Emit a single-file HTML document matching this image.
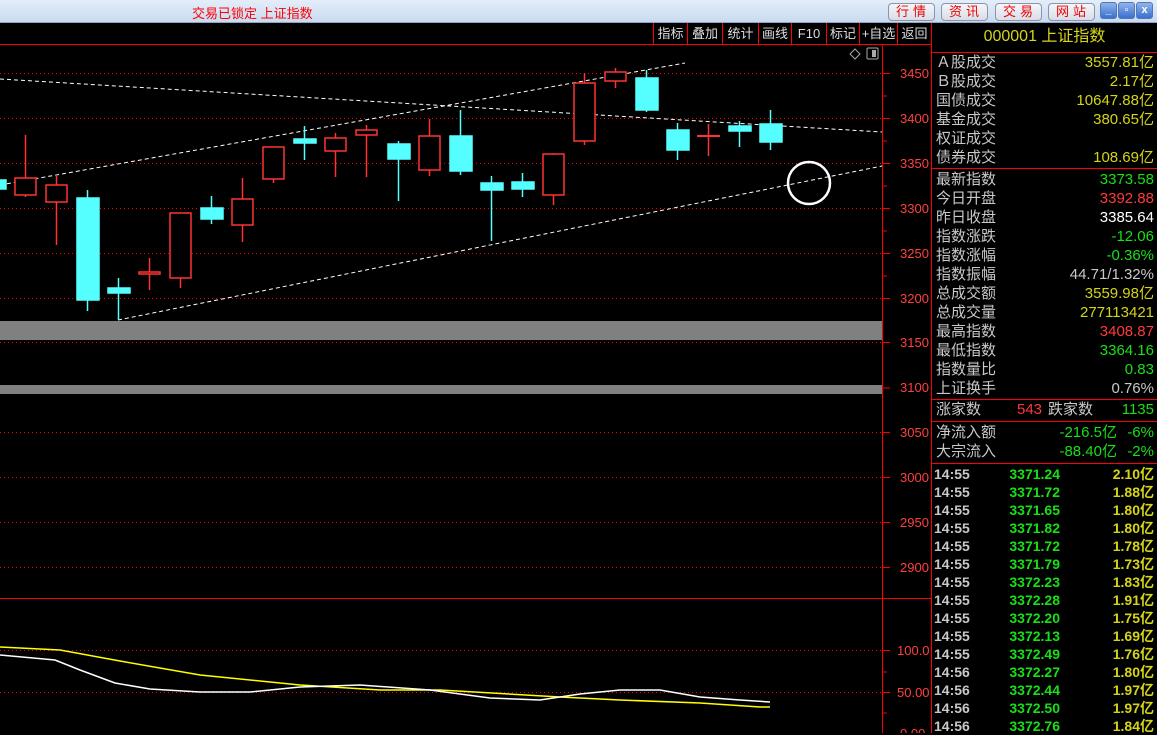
<!DOCTYPE html>
<html><head><meta charset="utf-8">
<style>
*{margin:0;padding:0;box-sizing:border-box}
body{width:1157px;height:733px;overflow:hidden;background:#000;font-family:"Liberation Sans","Noto Sans CJK SC",sans-serif;position:relative}
.title{position:absolute;left:0;top:0;width:1157px;height:23px;background:linear-gradient(#e4eefa,#c9daf0);border-bottom:1px solid #8fa4c0}
.title .t{position:absolute;left:192px;top:3px;color:#f00;font-size:13px}
.btn{position:absolute;top:3px;height:18px;width:47px;border:1px solid #8a96a8;border-radius:4px;background:linear-gradient(#f4f6fa,#d8dee8);color:#e00;font-size:13px;text-align:center;line-height:16px;letter-spacing:4px;padding-left:3px}
.wc{position:absolute;top:2px;width:17px;height:17px;border-radius:3px;background:linear-gradient(#8fb4ec,#3b6fd0);border:1px solid #5578b0;color:#fff;font-size:11px;font-weight:bold;text-align:center;line-height:15px}
.tb{position:absolute;top:23px;height:21px;color:#ddd;font-size:13px;line-height:21px;text-align:center;border-left:1px solid #f00}
.p{position:absolute;font-size:15px;line-height:18px;white-space:nowrap}
.l{color:#c8c8c8;left:936px}
.r{text-align:right;right:3px}
.y{color:#d4d41a}.g{color:#16e016}.rd{color:#ff3a3a}.w{color:#fff}.gr{color:#c8c8c8}
.hl{position:absolute;left:932px;width:225px;height:1px;background:#f00}
.tk{position:absolute;left:934px;width:220px;height:18px;font-size:14px;line-height:18px;font-weight:bold}
.tk span{position:absolute;top:0}
.tk .a{left:0;color:#c8c8c8}.tk .b{right:94px;color:#16e016}.tk .c{right:0;color:#d4d41a}
</style></head><body>
<div class="title"><span class="t">交易已锁定 上证指数</span>
<div class="btn" style="left:888px">行情</div><div class="btn" style="left:941px">资讯</div><div class="btn" style="left:995px">交易</div><div class="btn" style="left:1048px">网站</div>
<div class="wc" style="left:1100px">_</div><div class="wc" style="left:1118px">▫</div><div class="wc" style="left:1136px">x</div>
</div>
<div class="tb" style="left:653px;width:34px">指标</div>
<div class="tb" style="left:687px;width:35px">叠加</div>
<div class="tb" style="left:722px;width:36px">统计</div>
<div class="tb" style="left:758px;width:33px">画线</div>
<div class="tb" style="left:791px;width:35px">F10</div>
<div class="tb" style="left:826px;width:33px">标记</div>
<div class="tb" style="left:859px;width:38px">+自选</div>
<div class="tb" style="left:897px;width:35px;border-right:1px solid #f00">返回</div>

<svg style="position:absolute;left:0;top:0" width="932" height="733">
<line x1="0" y1="44.5" x2="932" y2="44.5" stroke="#f00"/>
<line x1="931.5" y1="23" x2="931.5" y2="733" stroke="#f00"/>
<line x1="882.5" y1="44" x2="882.5" y2="733" stroke="#f00"/>
<line x1="0" y1="598.5" x2="932" y2="598.5" stroke="#f00"/>
<rect x="0" y="321" width="882" height="19" fill="#808080"/>
<rect x="0" y="385" width="882" height="9" fill="#808080"/>
<g stroke="#f00" stroke-dasharray="1,3" stroke-width="1">
<line x1="0" y1="73.5" x2="882" y2="73.5"/><line x1="0" y1="118.5" x2="882" y2="118.5"/><line x1="0" y1="163.5" x2="882" y2="163.5"/><line x1="0" y1="208.5" x2="882" y2="208.5"/><line x1="0" y1="253.5" x2="882" y2="253.5"/><line x1="0" y1="298.5" x2="882" y2="298.5"/><line x1="0" y1="342.5" x2="882" y2="342.5"/><line x1="0" y1="432.5" x2="882" y2="432.5"/><line x1="0" y1="477.5" x2="882" y2="477.5"/><line x1="0" y1="522.5" x2="882" y2="522.5"/><line x1="0" y1="567.5" x2="882" y2="567.5"/><line x1="0" y1="650.5" x2="882" y2="650.5"/><line x1="0" y1="692.5" x2="882" y2="692.5"/>
</g>
<g stroke="#f00"><line x1="883" y1="73.5" x2="890" y2="73.5"/><line x1="883" y1="96" x2="887" y2="96"/><line x1="883" y1="118.5" x2="890" y2="118.5"/><line x1="883" y1="141" x2="887" y2="141"/><line x1="883" y1="163.5" x2="890" y2="163.5"/><line x1="883" y1="186" x2="887" y2="186"/><line x1="883" y1="208.5" x2="890" y2="208.5"/><line x1="883" y1="231" x2="887" y2="231"/><line x1="883" y1="253.5" x2="890" y2="253.5"/><line x1="883" y1="276" x2="887" y2="276"/><line x1="883" y1="298.5" x2="890" y2="298.5"/><line x1="883" y1="342.5" x2="890" y2="342.5"/><line x1="883" y1="388" x2="890" y2="388"/><line x1="883" y1="432.5" x2="890" y2="432.5"/><line x1="883" y1="477.5" x2="890" y2="477.5"/><line x1="883" y1="522.5" x2="890" y2="522.5"/><line x1="883" y1="567.5" x2="890" y2="567.5"/><line x1="883" y1="650.5" x2="890" y2="650.5"/><line x1="883" y1="672" x2="887" y2="672"/><line x1="883" y1="692.5" x2="890" y2="692.5"/><line x1="883" y1="713" x2="887" y2="713"/></g>
<g fill="#ff4040" font-size="13" font-family="Liberation Sans,sans-serif">
<text x="900" y="78">3450</text><text x="900" y="123">3400</text><text x="900" y="168">3350</text><text x="900" y="213">3300</text><text x="900" y="258">3250</text><text x="900" y="303">3200</text><text x="900" y="347">3150</text><text x="900" y="392">3100</text><text x="900" y="437">3050</text><text x="900" y="482">3000</text><text x="900" y="527">2950</text><text x="900" y="572">2900</text><text x="897" y="655">100.0</text><text x="897" y="697">50.00</text><text x="900" y="738">0.00</text>
</g>
<path d="M850 54 l5 -5 l5 5 l-5 5z" fill="none" stroke="#aaa"/>
<rect x="867" y="48" width="11" height="11" fill="none" stroke="#aaa" rx="1"/><rect x="872" y="50" width="4" height="7" fill="#aaa"/>
<g stroke="#fff" stroke-width="1" stroke-dasharray="4,3" fill="none">
<line x1="0" y1="79" x2="882" y2="132"/>
<line x1="0" y1="185" x2="685" y2="63"/>
<line x1="118" y1="320" x2="882" y2="166"/>
</g>
<circle cx="809" cy="183" r="21" fill="none" stroke="#fff" stroke-width="2.5"/>
<g stroke-width="1.5">
<g fill="#55ffff" stroke="#55ffff">
<rect x="0" y="180" width="6" height="9"/>
<line x1="87.5" y1="190" x2="87.5" y2="311"/><rect x="77" y="198" width="22" height="102"/>
<line x1="118.5" y1="278" x2="118.5" y2="320"/><rect x="108" y="288" width="22" height="5"/>
<line x1="211.5" y1="196" x2="211.5" y2="224"/><rect x="201" y="208" width="22" height="11"/>
<line x1="304.5" y1="126" x2="304.5" y2="160"/><rect x="294" y="139" width="22" height="4"/>
<line x1="398.5" y1="141" x2="398.5" y2="201"/><rect x="388" y="144" width="22" height="15"/>
<line x1="460.5" y1="110" x2="460.5" y2="175"/><rect x="450" y="136" width="22" height="35"/>
<line x1="491.5" y1="176" x2="491.5" y2="241"/><rect x="481" y="183" width="22" height="7"/>
<line x1="522.5" y1="173" x2="522.5" y2="197"/><rect x="512" y="182" width="22" height="7"/>
<line x1="646.5" y1="70" x2="646.5" y2="112"/><rect x="636" y="78" width="22" height="32"/>
<line x1="677.5" y1="123" x2="677.5" y2="160"/><rect x="667" y="130" width="22" height="20"/>
<line x1="739.5" y1="121" x2="739.5" y2="147"/><rect x="729" y="126" width="22" height="5"/>
<line x1="770.5" y1="110" x2="770.5" y2="150"/><rect x="760" y="124" width="22" height="18"/>
</g>
<g fill="#000" stroke="#ff3333">
<line x1="25.5" y1="135" x2="25.5" y2="197"/><rect x="15" y="178" width="21" height="17"/>
<line x1="56.5" y1="176" x2="56.5" y2="245"/><rect x="46" y="185" width="21" height="17"/>
<line x1="149.5" y1="258" x2="149.5" y2="290"/><rect x="139" y="272" width="21" height="2"/>
<line x1="180.5" y1="278" x2="180.5" y2="288"/><rect x="170" y="213" width="21" height="65"/>
<line x1="242.5" y1="178" x2="242.5" y2="242"/><rect x="232" y="199" width="21" height="26"/>
<line x1="273.5" y1="179" x2="273.5" y2="183"/><rect x="263" y="147" width="21" height="32"/>
<line x1="335.5" y1="133" x2="335.5" y2="177"/><rect x="325" y="138" width="21" height="13"/>
<line x1="366.5" y1="125" x2="366.5" y2="177"/><rect x="356" y="130" width="21" height="5"/>
<line x1="429.5" y1="119" x2="429.5" y2="176"/><rect x="419" y="136" width="21" height="34"/>
<line x1="553.5" y1="153" x2="553.5" y2="205"/><rect x="543" y="154" width="21" height="41"/>
<line x1="584.5" y1="73" x2="584.5" y2="145"/><rect x="574" y="83" width="21" height="58"/>
<line x1="615.5" y1="68" x2="615.5" y2="88"/><rect x="605" y="72" width="21" height="9"/>
<line x1="708.5" y1="124" x2="708.5" y2="156"/><line x1="697" y1="136" x2="720" y2="136" stroke-width="2"/>
</g>
</g>
<polyline fill="none" stroke="#ffff00" stroke-width="1.5" points="0,647 60,650 120,661 200,675 300,685 380,690 440,690 560,697 620,700 700,703 760,707 770,707"/>
<polyline fill="none" stroke="#fff" stroke-width="1.5" points="0,655 55,660 80,670 115,683 150,689 200,692 250,692 300,687 360,685 430,690 490,698 540,700 580,694 620,690 660,690 700,697 740,700 770,702"/>
</svg>

<div class="p y" style="left:932px;width:225px;top:28px;text-align:center;font-size:16px">000001 上证指数</div>
<div class="hl" style="top:52px"></div>
<div class="p l" style="top:54px">Ａ股成交</div><div class="p r y" style="top:54px">3557.81亿</div>
<div class="p l" style="top:73px">Ｂ股成交</div><div class="p r y" style="top:73px">2.17亿</div>
<div class="p l" style="top:92px">国债成交</div><div class="p r y" style="top:92px">10647.88亿</div>
<div class="p l" style="top:111px">基金成交</div><div class="p r y" style="top:111px">380.65亿</div>
<div class="p l" style="top:130px">权证成交</div>
<div class="p l" style="top:149px">债券成交</div><div class="p r y" style="top:149px">108.69亿</div>
<div class="hl" style="top:168px"></div>
<div class="p l" style="top:171px">最新指数</div><div class="p r g" style="top:171px">3373.58</div>
<div class="p l" style="top:190px">今日开盘</div><div class="p r rd" style="top:190px">3392.88</div>
<div class="p l" style="top:209px">昨日收盘</div><div class="p r w" style="top:209px">3385.64</div>
<div class="p l" style="top:228px">指数涨跌</div><div class="p r g" style="top:228px">-12.06</div>
<div class="p l" style="top:247px">指数涨幅</div><div class="p r g" style="top:247px">-0.36%</div>
<div class="p l" style="top:266px">指数振幅</div><div class="p r gr" style="top:266px">44.71/1.32%</div>
<div class="p l" style="top:285px">总成交额</div><div class="p r y" style="top:285px">3559.98亿</div>
<div class="p l" style="top:304px">总成交量</div><div class="p r y" style="top:304px">277113421</div>
<div class="p l" style="top:323px">最高指数</div><div class="p r rd" style="top:323px">3408.87</div>
<div class="p l" style="top:342px">最低指数</div><div class="p r g" style="top:342px">3364.16</div>
<div class="p l" style="top:361px">指数量比</div><div class="p r g" style="top:361px">0.83</div>
<div class="p l" style="top:380px">上证换手</div><div class="p r gr" style="top:380px">0.76%</div>
<div class="hl" style="top:399px"></div>
<div class="p l" style="top:401px">涨家数</div><div class="p rd" style="top:401px;left:1017px">543</div><div class="p gr" style="top:401px;left:1048px">跌家数</div><div class="p r g" style="top:401px">1135</div>
<div class="hl" style="top:421px"></div>
<div class="p l" style="top:424px">净流入额</div><div class="p g" style="top:424px;right:40px">-216.5亿</div><div class="p r g" style="top:424px">-6%</div>
<div class="p l" style="top:443px">大宗流入</div><div class="p g" style="top:443px;right:40px">-88.40亿</div><div class="p r g" style="top:443px">-2%</div>
<div class="hl" style="top:463px"></div>
<div class="tk" style="top:465px"><span class="a">14:55</span><span class="b">3371.24</span><span class="c">2.10亿</span></div>
<div class="tk" style="top:483px"><span class="a">14:55</span><span class="b">3371.72</span><span class="c">1.88亿</span></div>
<div class="tk" style="top:501px"><span class="a">14:55</span><span class="b">3371.65</span><span class="c">1.80亿</span></div>
<div class="tk" style="top:519px"><span class="a">14:55</span><span class="b">3371.82</span><span class="c">1.80亿</span></div>
<div class="tk" style="top:537px"><span class="a">14:55</span><span class="b">3371.72</span><span class="c">1.78亿</span></div>
<div class="tk" style="top:555px"><span class="a">14:55</span><span class="b">3371.79</span><span class="c">1.73亿</span></div>
<div class="tk" style="top:573px"><span class="a">14:55</span><span class="b">3372.23</span><span class="c">1.83亿</span></div>
<div class="tk" style="top:591px"><span class="a">14:55</span><span class="b">3372.28</span><span class="c">1.91亿</span></div>
<div class="tk" style="top:609px"><span class="a">14:55</span><span class="b">3372.20</span><span class="c">1.75亿</span></div>
<div class="tk" style="top:627px"><span class="a">14:55</span><span class="b">3372.13</span><span class="c">1.69亿</span></div>
<div class="tk" style="top:645px"><span class="a">14:55</span><span class="b">3372.49</span><span class="c">1.76亿</span></div>
<div class="tk" style="top:663px"><span class="a">14:56</span><span class="b">3372.27</span><span class="c">1.80亿</span></div>
<div class="tk" style="top:681px"><span class="a">14:56</span><span class="b">3372.44</span><span class="c">1.97亿</span></div>
<div class="tk" style="top:699px"><span class="a">14:56</span><span class="b">3372.50</span><span class="c">1.97亿</span></div>
<div class="tk" style="top:717px"><span class="a">14:56</span><span class="b">3372.76</span><span class="c">1.84亿</span></div>
</body></html>
